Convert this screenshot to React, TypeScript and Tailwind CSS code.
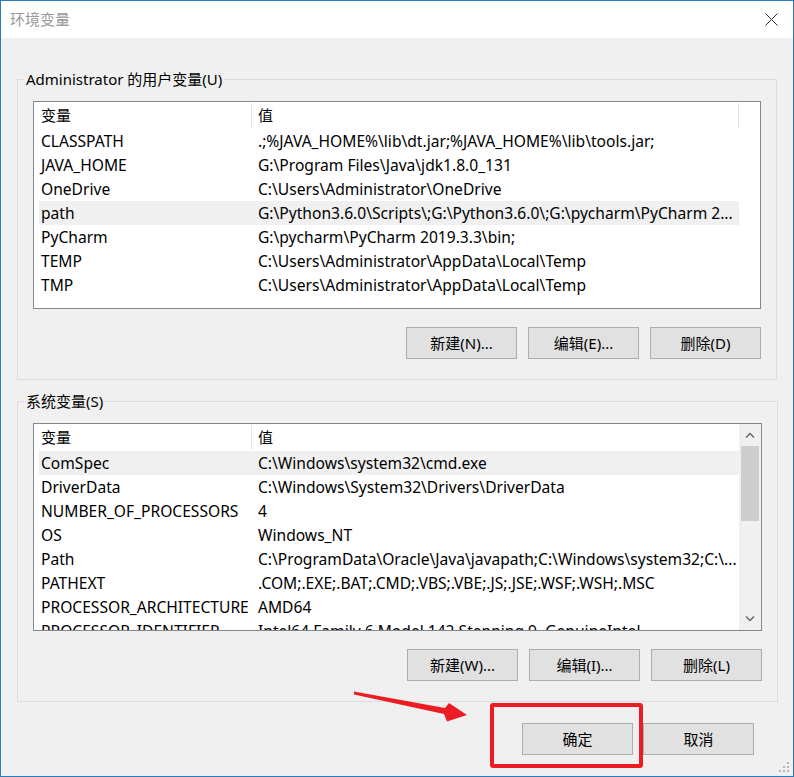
import React from "react";

const userVars: [string, string][] = [
  ["CLASSPATH", ".;%JAVA_HOME%\\lib\\dt.jar;%JAVA_HOME%\\lib\\tools.jar;"],
  ["JAVA_HOME", "G:\\Program Files\\Java\\jdk1.8.0_131"],
  ["OneDrive", "C:\\Users\\Administrator\\OneDrive"],
  ["path", "G:\\Python3.6.0\\Scripts\\;G:\\Python3.6.0\\;G:\\pycharm\\PyCharm 2..."],
  ["PyCharm", "G:\\pycharm\\PyCharm 2019.3.3\\bin;"],
  ["TEMP", "C:\\Users\\Administrator\\AppData\\Local\\Temp"],
  ["TMP", "C:\\Users\\Administrator\\AppData\\Local\\Temp"],
];

const systemVars: [string, string][] = [
  ["ComSpec", "C:\\Windows\\system32\\cmd.exe"],
  ["DriverData", "C:\\Windows\\System32\\Drivers\\DriverData"],
  ["NUMBER_OF_PROCESSORS", "4"],
  ["OS", "Windows_NT"],
  ["Path", "C:\\ProgramData\\Oracle\\Java\\javapath;C:\\Windows\\system32;C:\\..."],
  ["PATHEXT", ".COM;.EXE;.BAT;.CMD;.VBS;.VBE;.JS;.JSE;.WSF;.WSH;.MSC"],
  ["PROCESSOR_ARCHITECTURE", "AMD64"],
  ["PROCESSOR_IDENTIFIER", "Intel64 Family 6 Model 142 Stepping 9, GenuineIntel"],
];

function WinButton({ label }: { label: string }) {
  return (
    <button className="w-[111px] h-[32px] border border-[#adadad] bg-[#e1e1e1] text-[15px] text-black leading-none">
      {label}
    </button>
  );
}

function Chevron({ up }: { up?: boolean }) {
  return (
    <svg width="10" height="6" viewBox="0 0 10 6" className={up ? "" : "rotate-180"}>
      <path d="M1 5.5 L5 1.5 L9 5.5" fill="none" stroke="#606060" strokeWidth="1.3" />
    </svg>
  );
}

function Scrollbar() {
  return (
    <div className="w-[22px] shrink-0 bg-[#f0f0f0] flex flex-col">
      <div className="h-[22px] flex items-center justify-center">
        <Chevron up />
      </div>
      <div className="px-[2px]">
        <div className="h-[75px] bg-[#cdcdcd]" />
      </div>
      <div className="flex-1" />
      <div className="h-[22px] flex items-center justify-center">
        <Chevron />
      </div>
    </div>
  );
}

function VarList({ rows, selected, scroll }: { rows: [string, string][]; selected: number; scroll?: boolean }) {
  return (
    <div className="mx-[9px] h-[208px] border border-[#828790] bg-white overflow-hidden flex text-[15.6px]">
      <div className="flex-1 min-w-0 flex flex-col">
        <div className="h-[27px] shrink-0 flex items-center text-[15px]">
          <div className="w-[217px] pl-[7px]">变量</div>
          <div className="w-px h-[25px] bg-[#e5e5e5]" />
          <div className="w-[486px] pl-[6px]">值</div>
          {!scroll && <div className="w-px h-[25px] bg-[#e5e5e5]" />}
        </div>
        {rows.map(([name, value], i) => (
          <div
            key={name}
            className={`ml-[5px] w-[700px] h-[24px] pt-[2px] shrink-0 flex items-center whitespace-nowrap ${i === selected ? "bg-[#f0f0f0]" : ""}`}
          >
            <div className="w-[217px] pl-[2px] overflow-hidden">{name}</div>
            <div className="flex-1 pl-[2px] overflow-hidden">{value}</div>
          </div>
        ))}
      </div>
      {scroll && <Scrollbar />}
    </div>
  );
}

function GroupBox({ title, children, className = "" }: { title: string; children: React.ReactNode; className?: string }) {
  return (
    <fieldset className={`mx-[16px] border border-[#dcdcdc] px-[6px] pt-[12px] pb-[20px] ${className}`}>
      <legend className="px-[2px] leading-[20px]">{title}</legend>
      {children}
    </fieldset>
  );
}

export default function App() {
  return (
    <div className="relative w-[794px] h-[777px] border border-[#2b7bbf] bg-[#f0f0f0] text-[15px] text-black font-['Noto_Sans','Noto_Sans_CJK_SC',sans-serif] overflow-hidden">
      {/* title bar */}
      <div className="h-[37px] bg-white flex items-center justify-between pl-[9px] pr-[15px]">
        <span className="text-[#999999]">环境变量</span>
        <svg width="13" height="13" viewBox="0 0 13 13">
          <path d="M0.5 0.5 L12.5 12.5 M12.5 0.5 L0.5 12.5" stroke="#333" strokeWidth="1" />
        </svg>
      </div>

      <GroupBox title="Administrator 的用户变量(U)" className="mt-[31px]">
        <VarList rows={userVars} selected={3} />
        <div className="mt-[18px] mr-[9px] flex justify-end gap-[11px]">
          <WinButton label="新建(N)..." />
          <WinButton label="编辑(E)..." />
          <WinButton label="删除(D)" />
        </div>
      </GroupBox>

      <GroupBox title="系统变量(S)" className="mt-[11px]">
        <VarList rows={systemVars} selected={0} scroll />
        <div className="mt-[18px] mr-[9px] flex justify-end gap-[11px]">
          <WinButton label="新建(W)..." />
          <WinButton label="编辑(I)..." />
          <WinButton label="删除(L)" />
        </div>
      </GroupBox>

      <div className="mt-[21px] pr-[39px] flex justify-end gap-[10px]">
        <WinButton label="确定" />
        <WinButton label="取消" />
      </div>

      {/* annotation overlays */}
      <div className="absolute left-[489px] top-[702px] w-[153px] h-[65px] border-[4px] border-[#ec1c24] rounded-[3px] pointer-events-none" />
      <svg className="absolute left-0 top-0 pointer-events-none" width="794" height="777">
        <polygon points="353,690.5 444,707 448,702 466,714 446,720.5 443,713 353,693.5" fill="#ec1c24" />
      </svg>
      <svg className="absolute right-[3px] bottom-[3px]" width="11" height="11" viewBox="0 0 11 11">
        <g fill="#b5b5b5">
          <rect x="8" y="0" width="2" height="2" />
          <rect x="8" y="4" width="2" height="2" />
          <rect x="4" y="4" width="2" height="2" />
          <rect x="8" y="8" width="2" height="2" />
          <rect x="4" y="8" width="2" height="2" />
          <rect x="0" y="8" width="2" height="2" />
        </g>
      </svg>
    </div>
  );
}
